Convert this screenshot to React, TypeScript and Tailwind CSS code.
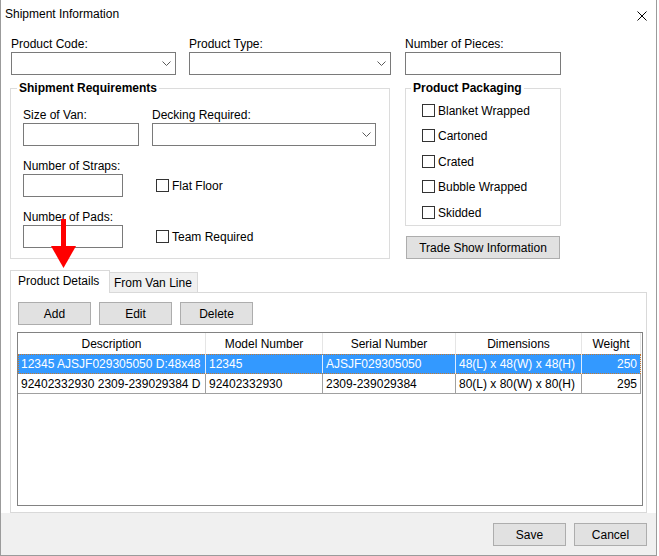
import React from "react";

const rows = [
  {
    id: 1,
    desc: "12345 AJSJF029305050 D:48x48",
    model: "12345",
    serial: "AJSJF029305050",
    dim: "48(L) x 48(W) x 48(H)",
    weight: "250",
    selected: true,
  },
  {
    id: 2,
    desc: "92402332930 2309-239029384 D",
    model: "92402332930",
    serial: "2309-239029384",
    dim: "80(L) x 80(W) x 80(H)",
    weight: "295",
    selected: false,
  },
];

const packaging = [
  { label: "Blanket Wrapped", gap: "" },
  { label: "Cartoned", gap: "mt-[12px]" },
  { label: "Crated", gap: "mt-[13px]" },
  { label: "Bubble Wrapped", gap: "mt-[12px]" },
  { label: "Skidded", gap: "mt-[13px]" },
];

function Label({ children }: { children: React.ReactNode }) {
  return <div className="h-[14px] leading-[14px] mb-px whitespace-nowrap">{children}</div>;
}

function TextBox({ className }: { className: string }) {
  return <div className={`h-[23px] border border-[#7a7a7a] bg-white ${className}`} />;
}

function Combo({ className }: { className: string }) {
  return (
    <div className={`h-[23px] border border-[#7a7a7a] bg-white flex items-center justify-end pr-[4px] ${className}`}>
      <svg width="9" height="5" viewBox="0 0 9 5">
        <polyline points="0.5,0.5 4.5,4.5 8.5,0.5" fill="none" stroke="#5a5a5a" strokeWidth="1" />
      </svg>
    </div>
  );
}

function Check() {
  return <span className="block w-[13px] h-[13px] border border-[#333333] bg-white shrink-0" />;
}

function WinButton({ children, className }: { children: React.ReactNode; className: string }) {
  return (
    <button className={`h-[23px] bg-[#e1e1e1] border border-[#adadad] flex items-center justify-center leading-[14px] ${className}`}>
      {children}
    </button>
  );
}

export default function App() {
  return (
    <div className="relative w-[659px] h-[556px] bg-white text-[12px] leading-[14px] text-black font-['Liberation_Sans',Arial,sans-serif]">
      <div className="w-[657px] h-[556px] flex flex-col border-x border-b border-[#9b9b9b]">
        {/* title bar */}
        <div className="h-[28px] shrink-0 flex items-center justify-between pl-[4px] pr-[9px]">
          <span>Shipment Information</span>
          <svg width="10" height="10" viewBox="0 0 10 10" className="mt-[4px]">
            <path d="M0.5 0.5 L9.5 9.5 M9.5 0.5 L0.5 9.5" stroke="#000" strokeWidth="1" />
          </svg>
        </div>

        <div className="h-[485px] shrink-0 flex flex-col">
          {/* top fields */}
          <div className="flex pl-[10px] pt-[9px]">
            <div className="w-[165px]">
              <Label>Product Code:</Label>
              <Combo className="w-full" />
            </div>
            <div className="w-[202px] ml-[13px]">
              <Label>Product Type:</Label>
              <Combo className="w-full" />
            </div>
            <div className="w-[156px] ml-[14px]">
              <Label>Number of Pieces:</Label>
              <TextBox className="w-full" />
            </div>
          </div>

          {/* groups */}
          <div className="flex items-start pl-[9px] mt-[6px]">
            <fieldset className="w-[380px] border border-[#dcdcdc] p-0 m-0">
              <legend className="ml-[6px] px-[2px] font-bold leading-[14px]">Shipment Requirements</legend>
              <div className="pl-[12px] pt-[13px] pb-[10px] flex flex-col">
                <div className="flex">
                  <div className="w-[129px]">
                    <Label>Size of Van:</Label>
                    <TextBox className="w-[116px]" />
                  </div>
                  <div className="w-[224px]">
                    <Label>Decking Required:</Label>
                    <Combo className="w-full" />
                  </div>
                </div>
                <div className="flex items-end mt-[13px]">
                  <div className="w-[129px]">
                    <Label>Number of Straps:</Label>
                    <TextBox className="w-[100px]" />
                  </div>
                  <div className="h-[23px] flex items-center pl-[4px]">
                    <Check />
                    <span className="ml-[3px]">Flat Floor</span>
                  </div>
                </div>
                <div className="flex items-end mt-[13px]">
                  <div className="w-[129px]">
                    <Label>Number of Pads:</Label>
                    <TextBox className="w-[100px]" />
                  </div>
                  <div className="h-[23px] flex items-center pl-[4px]">
                    <Check />
                    <span className="ml-[3px]">Team Required</span>
                  </div>
                </div>
              </div>
            </fieldset>

            <div className="ml-[15px] w-[156px] flex flex-col">
              <fieldset className="w-[156px] border border-[#dcdcdc] p-0 m-0">
                <legend className="ml-[5px] px-[2px] font-bold leading-[14px]">Product Packaging</legend>
                <div className="pl-[16px] pt-[9px] pb-[6px] flex flex-col">
                  {packaging.map((p) => (
                    <div key={p.label} className={`h-[13px] flex items-center ${p.gap}`}>
                      <Check />
                      <span className="ml-[3px] whitespace-nowrap">{p.label}</span>
                    </div>
                  ))}
                </div>
              </fieldset>
              <WinButton className="w-[154px] ml-px mt-[10px]">Trade Show Information</WinButton>
            </div>
          </div>

          {/* tabs */}
          <div className="mx-[9px] mt-[11px] flex flex-col">
            <div className="h-[22px] flex items-end">
              <div className="relative z-10 w-[100px] h-[23px] -mb-px bg-white border border-b-0 border-[#d9d9d9] pl-[7px] pt-[3px] whitespace-nowrap">
                Product Details
              </div>
              <div className="w-[88px] h-[20px] bg-[#f0f0f0] border border-l-0 border-b-0 border-[#d9d9d9] pl-[4px] pt-[3px] whitespace-nowrap">
                From Van Line
              </div>
            </div>
            <div className="h-[221px] border border-[#d9d9d9] pl-[6px] pt-[9px] flex flex-col">
              <div className="flex gap-[8px] ml-px">
                <WinButton className="w-[73px]">Add</WinButton>
                <WinButton className="w-[73px]">Edit</WinButton>
                <WinButton className="w-[73px]">Delete</WinButton>
              </div>

              <div className="mt-[7px] w-[626px] h-[174px] border border-[#828282] bg-white flex flex-col">
                <div className="h-[21px] flex">
                  <div className="w-[188px] border-r border-[#e5e5e5] flex items-center justify-center">Description</div>
                  <div className="w-[117px] border-r border-[#e5e5e5] flex items-center justify-center">Model Number</div>
                  <div className="w-[133px] border-r border-[#e5e5e5] flex items-center justify-center">Serial Number</div>
                  <div className="w-[126px] border-r border-[#e5e5e5] flex items-center justify-center">Dimensions</div>
                  <div className="w-[59px] border-r border-[#e5e5e5] flex items-center justify-center">Weight</div>
                </div>
                {rows.map((r) => (
                  <div
                    key={r.id}
                    className={
                      r.selected
                        ? "h-[20px] w-[623px] flex bg-[#3399ff] text-white outline-1 outline-dotted outline-[#c8782c] -outline-offset-1"
                        : "h-[20px] w-[623px] flex border-b border-[#a0a0a0]"
                    }
                  >
                    <div className={`w-[188px] border-r pl-[3px] flex items-center overflow-hidden whitespace-nowrap ${r.selected ? "border-[#dcecff]" : "border-[#a0a0a0]"}`}>
                      {r.desc}
                    </div>
                    <div className={`w-[117px] border-r pl-[3px] flex items-center overflow-hidden whitespace-nowrap ${r.selected ? "border-[#dcecff]" : "border-[#a0a0a0]"}`}>
                      {r.model}
                    </div>
                    <div className={`w-[133px] border-r pl-[3px] flex items-center overflow-hidden whitespace-nowrap ${r.selected ? "border-[#dcecff]" : "border-[#a0a0a0]"}`}>
                      {r.serial}
                    </div>
                    <div className={`w-[126px] border-r pl-[3px] flex items-center overflow-hidden whitespace-nowrap ${r.selected ? "border-[#dcecff]" : "border-[#a0a0a0]"}`}>
                      {r.dim}
                    </div>
                    <div className={`w-[59px] border-r pr-[3px] flex items-center justify-end overflow-hidden whitespace-nowrap ${r.selected ? "border-[#dcecff]" : "border-[#a0a0a0]"}`}>
                      {r.weight}
                    </div>
                  </div>
                ))}
              </div>
            </div>
          </div>
        </div>

        {/* button bar */}
        <div className="flex-1 bg-[#f0f0f0] flex justify-end items-start pt-[10px] pr-[9px] gap-[8px]">
          <WinButton className="w-[73px]">Save</WinButton>
          <WinButton className="w-[73px]">Cancel</WinButton>
        </div>
      </div>

      {/* red annotation arrow */}
      <svg className="absolute left-[51px] top-[219px]" width="26" height="50" viewBox="0 0 26 50">
        <rect x="10" y="0" width="5" height="28" fill="#ff0000" />
        <polygon points="0,27 25,27 12.5,49" fill="#ff0000" />
      </svg>
    </div>
  );
}
